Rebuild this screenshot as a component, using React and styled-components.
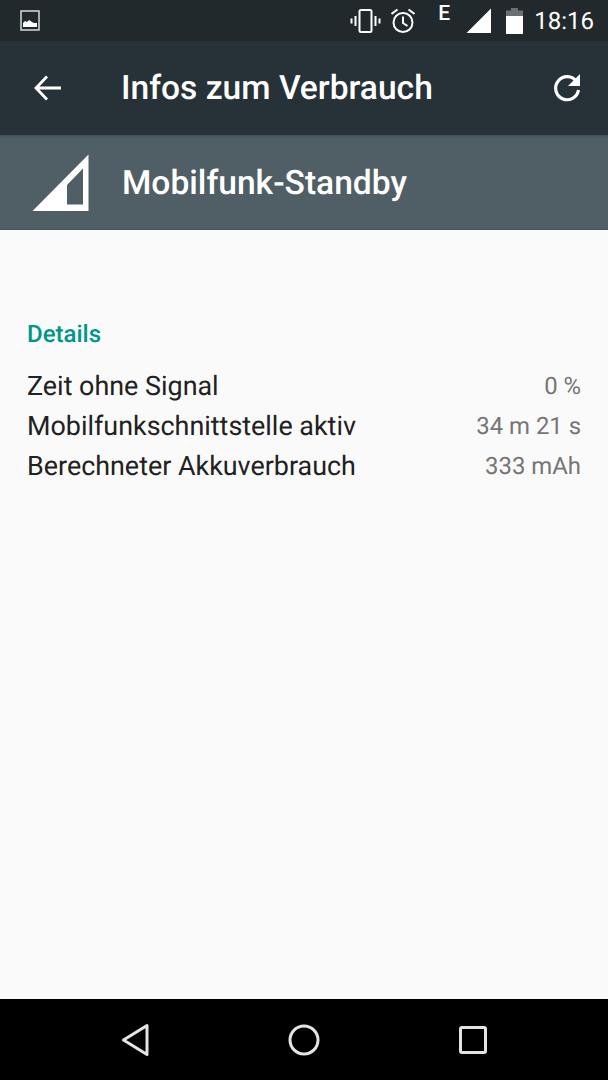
import React from "react";
import styled, { createGlobalStyle } from "styled-components";

const GlobalStyle = createGlobalStyle`
  html, body {
    margin: 0;
    padding: 0;
  }

  body {
    background: #fafafa;
    font-family: Roboto, "Noto Sans", sans-serif;
    text-rendering: geometricPrecision;
  }
`;

const Screen = styled.div`
  width: 608px;
  height: 1080px;
  display: flex;
  flex-direction: column;
  overflow: hidden;
  background: #fafafa;
`;

const StatusBar = styled.div`
  height: 41px;
  flex-shrink: 0;
  display: flex;
  align-items: center;
  justify-content: space-between;
  padding: 0 14px 0 20px;
  background: #22292d;
  color: #fff;
`;

const StatusIcons = styled.div`
  display: flex;
  align-items: center;
`;

const StatusIcon = styled.svg`
  margin-right: ${({ $gap }) => $gap}px;
`;

const NetworkLetter = styled.span`
  margin: 0 16px 12px 0;
  font-size: 21px;
  font-weight: 500;
  line-height: 17px;
`;

const Clock = styled.span`
  margin-left: 11px;
  font-size: 24px;
  font-weight: 400;
  line-height: 28px;
`;

const Toolbar = styled.header`
  height: 94px;
  flex-shrink: 0;
  display: flex;
  align-items: center;
  padding: 0 26px 0 34px;
  background: #263238;
  color: #fff;
`;

const ToolbarTitle = styled.h1`
  flex: 1;
  margin: 2px 0 0 60px;
  font-size: 33.6px;
  font-weight: 500;
  line-height: 38px;
`;

const AppHeader = styled.div`
  height: 95px;
  flex-shrink: 0;
  box-sizing: border-box;
  display: flex;
  align-items: center;
  padding: 0 0 0 32px;
  background: #505f66;
  border-bottom: 1px solid #46555b;
  box-shadow: inset 0 3px 3px -2px rgba(0, 0, 0, 0.25);
  color: #fff;
`;

const AppTitle = styled.h2`
  margin: 4px 0 0 33px;
  font-size: 33.6px;
  font-weight: 500;
  line-height: 38px;
`;

const Content = styled.main`
  flex: 1;
  padding: 92px 27px 0 27px;
`;

const SectionTitle = styled.div`
  margin-bottom: 20px;
  color: #009688;
  font-size: 24px;
  font-weight: 500;
  line-height: 24px;
`;

const DetailRow = styled.div`
  height: 40px;
  display: flex;
  align-items: center;
  justify-content: space-between;
`;

const DetailLabel = styled.span`
  color: #212121;
  font-size: 26.9px;
`;

const DetailValue = styled.span`
  color: #757575;
  font-size: 23.9px;
`;

const NavBar = styled.nav`
  height: 81px;
  flex-shrink: 0;
  display: grid;
  grid-template-columns: repeat(3, 169px);
  align-items: center;
  justify-content: center;
  justify-items: center;
  background: #000;
`;

const details = [
  { label: "Zeit ohne Signal", value: "0 %" },
  { label: "Mobilfunkschnittstelle aktiv", value: "34 m 21 s" },
  { label: "Berechneter Akkuverbrauch", value: "333 mAh" },
];

const App = () => {
  return (
    <Screen>
      <GlobalStyle />
      <StatusBar>
        <svg width="20" height="21" viewBox="0 0 20 21">
          <rect x="1" y="1" width="18" height="19" fill="#22292d" stroke="#d8dadb" strokeWidth="1.5" />
          <path d="M3 17v-4l2-2 2 1 2-2 3 2 2 1 3 0v4z" fill="#fff" />
        </svg>
        <StatusIcons>
          <StatusIcon $gap={10} width="31" height="26" viewBox="0 0 31 26">
            <rect x="9.500" y="2" width="12" height="22" rx="1.500" fill="none" stroke="#fff" strokeWidth="2" />
            <path d="M5.500 8v10M1.500 10.500v5M25.500 8v10M29.500 10.500v5" stroke="#fff" strokeWidth="2" />
          </StatusIcon>
          <StatusIcon $gap={23} width="24" height="26" viewBox="0 0 24 26">
            <circle cx="12" cy="14.500" r="9.500" fill="none" stroke="#fff" strokeWidth="2" />
            <path d="M12 8.500v6.500l4.500 3M0.500 6l6-4.500M23.500 6l-6-4.500" fill="none" stroke="#fff" strokeWidth="2" />
          </StatusIcon>
          <NetworkLetter>E</NetworkLetter>
          <StatusIcon $gap={15} width="25" height="26" viewBox="0 0 25 26">
            <path d="M25 0.500V25H0.500z" fill="#fff" />
          </StatusIcon>
          <svg width="17" height="26" viewBox="0 0 17 26">
            <path d="M5 0h7v2.500h5V8H0V2.500h5z" fill="#6b7073" />
            <path d="M0 8h17v18H0z" fill="#fff" />
          </svg>
          <Clock>18:16</Clock>
        </StatusIcons>
      </StatusBar>

      <Toolbar>
        <svg width="27" height="26" viewBox="0 0 27 26">
          <path d="M27 13H3M13 1.500L2 13l11 11.500" fill="none" stroke="#fff" strokeWidth="2.800" />
        </svg>
        <ToolbarTitle>Infos zum Verbrauch</ToolbarTitle>
        <svg width="30" height="30" viewBox="0 0 30 30">
          <path d="M24.500 8.500A11.500 11.500 0 1 0 26.500 17" fill="none" stroke="#fff" strokeWidth="3.200" />
          <path d="M28 1v12H16z" fill="#fff" />
        </svg>
      </Toolbar>

      <AppHeader>
        <svg width="57" height="57" viewBox="0 0 57 57">
          <path fillRule="evenodd" d="M56.500 0.500V57H0.500zM51 14.500L35 31V50.500H51z" fill="#fff" />
        </svg>
        <AppTitle>Mobilfunk-Standby</AppTitle>
      </AppHeader>

      <Content>
        <SectionTitle>Details</SectionTitle>
        {details.map((row) => (
          <DetailRow key={row.label}>
            <DetailLabel>{row.label}</DetailLabel>
            <DetailValue>{row.value}</DetailValue>
          </DetailRow>
        ))}
      </Content>

      <NavBar>
        <svg width="30" height="34" viewBox="0 0 30 34">
          <path d="M27 2.500V31.500L3.500 17z" fill="none" stroke="#e4e4e4" strokeWidth="3" strokeLinejoin="round" />
        </svg>
        <svg width="32" height="32" viewBox="0 0 32 32">
          <circle cx="16" cy="16" r="14" fill="none" stroke="#e4e4e4" strokeWidth="3" />
        </svg>
        <svg width="28" height="28" viewBox="0 0 28 28">
          <rect x="1.500" y="1.500" width="25" height="25" rx="1.500" fill="none" stroke="#e4e4e4" strokeWidth="3" />
        </svg>
      </NavBar>
    </Screen>
  );
};

export default App;
